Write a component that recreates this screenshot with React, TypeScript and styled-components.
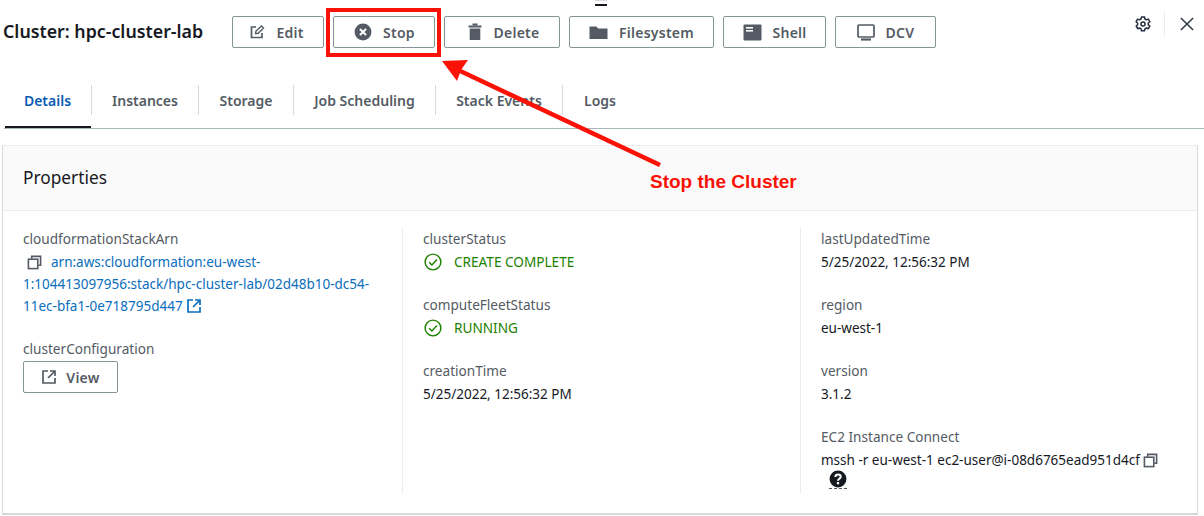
import styled, { createGlobalStyle } from 'styled-components';
import { ReactNode } from 'react';

const GlobalStyle = createGlobalStyle`
  html, body {
    margin: 0;
    padding: 0;
    background: #fff;
    font-family: 'Noto Sans', 'Open Sans', sans-serif;
    color: #16191f;
  }
  * { box-sizing: border-box; }
`;

const Page = styled.div`
  position: relative;
  width: 1204px;
  height: 516px;
  overflow: hidden;
`;

const DragHandle = styled.div`
  position: absolute;
  top: 0;
  left: 595px;
  width: 12px;
  height: 6px;
  border-top: 1px solid #d5dbdb;
  border-bottom: 2px solid #16191f;
`;

const Toolbar = styled.div`
  display: flex;
  align-items: center;
  height: 64px;
  padding-left: 3px;
`;

const Title = styled.h1`
  margin: -2px 28px 0 0;
  width: 201px;
  font-size: 17.8px;
  font-weight: 600;
  white-space: nowrap;
`;

const Actions = styled.div`
  display: flex;
  gap: 9px;
`;

const ActionButton = styled.button<{ $width: number; $nudge?: number }>`
  display: flex;
  align-items: center;
  justify-content: center;
  gap: 11px;
  width: ${({ $width }) => $width}px;
  height: 32px;
  background: #fff;
  border: 1px solid #879596;
  border-radius: 2px;
  font-family: inherit;
  font-size: 14px;
  font-weight: 600;
  letter-spacing: 0.25px;
  color: #545b64;
  padding: 0 ${({ $nudge }) => ($nudge && $nudge < 0 ? -$nudge : 0)}px 0 ${({ $nudge }) => ($nudge && $nudge > 0 ? $nudge : 0)}px;
`;

const ToolIcons = styled.div`
  display: flex;
  align-items: center;
  margin-left: auto;
  margin-top: -16px;
  margin-right: 0;
`;

const IconSlot = styled.div<{ $divider?: boolean }>`
  display: flex;
  align-items: center;
  width: ${({ $divider }) => ($divider ? 40 : 29)}px;
  height: 24px;
  ${({ $divider }) => $divider && 'border-left: 1px solid #eaeded; padding-left: 15px;'}
`;

const Tabs = styled.nav`
  display: flex;
  align-items: flex-start;
  height: 65px;
  margin-left: 4px;
  padding-top: 21px;
  border-bottom: 1px solid #aab7b8;
`;

const Tab = styled.div<{ $active?: boolean; $width: number; $last?: boolean }>`
  position: relative;
  display: flex;
  align-items: center;
  justify-content: center;
  width: ${({ $width }) => $width}px;
  height: 30px;
  font-size: 14px;
  font-weight: 600;
  color: ${({ $active }) => ($active ? '#0a5bb5' : '#545b64')};
  border-right: ${({ $last }) => ($last ? 'none' : '1px solid #d5dbdb')};
  ${({ $active }) =>
    $active &&
    `&::after {
      content: '';
      position: absolute;
      left: 1px;
      right: 0;
      top: 41px;
      height: 2px;
      background: #16191f;
    }`}
`;

const Panel = styled.section`
  margin: 16px 6px 0 2px;
  height: 370px;
  border: 1px solid #d5dbdb;
  border-top-color: #eaeded;
  border-bottom-width: 2px;
`;

const PanelHeader = styled.header`
  display: flex;
  align-items: center;
  height: 65px;
  padding-left: 20px;
  padding-bottom: 2px;
  background: #fafafa;
  border-bottom: 1px solid #eaeded;
  font-size: 17.3px;
  color: #16191f;
`;

const Columns = styled.div`
  display: grid;
  grid-template-columns: 399px 398px 1fr;
  padding-top: 16px;
  height: 283px;
`;

const Column = styled.div<{ $divider?: boolean }>`
  display: flex;
  flex-direction: column;
  gap: 21px;
  padding: 1px 20px 0;
  height: 267px;
  overflow: hidden;
  border-left: ${({ $divider }) => ($divider ? '1px solid #eaeded' : 'none')};
`;

const Field = styled.div`
  display: flex;
  flex-direction: column;
  gap: 2px;
`;

const Label = styled.div`
  font-size: 13.6px;
  line-height: 21px;
  color: #545b64;
`;

const Value = styled.div`
  font-size: 13.5px;
  line-height: 22px;
  color: #16191f;
`;

const ArnValue = styled.div`
  font-size: 13.5px;
  line-height: 22px;
  color: #0a6ebd;
  width: 352px;
`;

const CopyMark = styled.span<{ $left?: number; $right?: number }>`
  color: #545b64;
  margin-left: ${({ $left }) => $left ?? 0}px;
  margin-right: ${({ $right }) => $right ?? 0}px;
`;

const Status = styled.div`
  display: flex;
  align-items: center;
  gap: 12px;
  font-size: 13.6px;
  line-height: 22px;
  color: #1d8102;
  padding-left: 1px;
`;

const ViewButton = styled(ActionButton)`
  gap: 9px;
`;

const InlineSvg = styled.svg`
  display: inline-block;
  vertical-align: -3px;
`;

const HelpRow = styled.div`
  position: relative;
  height: 20px;
  padding-left: 8px;
  margin-top: -3px;
  &::after {
    content: '';
    position: absolute;
    left: 8px;
    top: 18px;
    width: 18px;
    border-top: 1px dashed #545b64;
  }
`;

const Annotation = styled.svg`
  position: absolute;
  inset: 0;
  pointer-events: none;
`;

const Callout = styled.div`
  position: absolute;
  left: 650px;
  top: 171px;
  font-family: 'Liberation Sans', Arial, sans-serif;
  font-size: 19px;
  font-weight: 700;
  color: #fb1207;
  white-space: nowrap;
`;

const Icon = ({ size = 16, children }: { size?: number; children: ReactNode }) => (
  <InlineSvg width={size} height={size} viewBox="0 0 16 16" fill="none" stroke="currentColor" strokeWidth="1.7">
    {children}
  </InlineSvg>
);

const CopyIcon = () => (
  <Icon size={15}>
    <path d="M5 4V1.5h9.5V11H12" />
    <rect x="1.5" y="4.5" width="10" height="10" />
  </Icon>
);

const ExternalIcon = () => (
  <Icon>
    <path d="M7 2H2v12h12V9" />
    <path d="M9 2h5v5M14 2 7 9" />
  </Icon>
);

const CheckIcon = () => (
  <Icon size={18}>
    <circle cx="8" cy="8" r="7" strokeWidth="1.3" />
    <path d="m4.6 8.2 2.4 2.4 4.6-4.8" strokeWidth="1.3" />
  </Icon>
);

const HelpIcon = () => (
  <svg width="18" height="18" viewBox="0 0 16 16">
    <circle cx="8" cy="8" r="7.5" fill="#16191f" />
    <path d="M5.6 6.2C5.7 4.8 6.7 4 8 4s2.4.8 2.4 2c0 1.8-2.4 1.8-2.4 3.6" fill="none" stroke="#fff" strokeWidth="1.8" />
    <rect x="7" y="10.7" width="2" height="2" fill="#fff" />
  </svg>
);

const timeFields = [
  { label: 'lastUpdatedTime', value: '5/25/2022, 12:56:32 PM' },
  { label: 'region', value: 'eu-west-1' },
  { label: 'version', value: '3.1.2' },
];

const tabs = [
  { label: 'Details', width: 88, active: true },
  { label: 'Instances', width: 107 },
  { label: 'Storage', width: 95 },
  { label: 'Job Scheduling', width: 142 },
  { label: 'Stack Events', width: 127 },
  { label: 'Logs', width: 74, last: true },
];

export default function App() {
  return (
    <Page>
      <GlobalStyle />
      <DragHandle />
      <Toolbar>
        <Title>Cluster: hpc-cluster-lab</Title>
        <Actions>
          <ActionButton $width={92} $nudge={-3}>
            <Icon>
              <path d="M7 3H2.5v10.500h10.500V9" />
              <path d="m6.500 9.500.5-2.500 5.500-5 2 2-5.500 5.500z" strokeWidth="1.400" />
            </Icon>
            Edit
          </ActionButton>
          <ActionButton $width={102} $nudge={1}>
            <svg width="18" height="18" viewBox="0 0 16 16">
              <circle cx="8" cy="8" r="7.500" fill="#545b64" />
              <path d="m5.300 5.300 5.400 5.400m0-5.400-5.400 5.400" stroke="#fff" strokeWidth="1.800" />
            </svg>
            Stop
          </ActionButton>
          <ActionButton $width={116} $nudge={2}>
            <svg width="16" height="18" viewBox="0 0 16 18" fill="#545b64">
              <rect x="5.500" y="0.500" width="5" height="2" />
              <rect x="1.500" y="2.500" width="13" height="2" />
              <path d="M2.700 5.500h10.600V17H2.700z" />
            </svg>
            Delete
          </ActionButton>
          <ActionButton $width={145}>
            <svg width="19" height="15" viewBox="0 0 19 15" fill="#545b64">
              <path d="M0.500 1.500h7l1.500 2h9.500V14H0.500z" />
            </svg>
            Filesystem
          </ActionButton>
          <ActionButton $width={103}>
            <svg width="19" height="17" viewBox="0 0 19 17">
              <rect x="0.500" y="0.500" width="18" height="16" rx="1" fill="#545b64" />
              <rect x="3" y="3" width="7" height="1.600" fill="#fff" />
              <rect x="3" y="6" width="7" height="1.600" fill="#fff" />
            </svg>
            Shell
          </ActionButton>
          <ActionButton $width={101}>
            <svg width="18" height="17" viewBox="0 0 18 17" fill="none" stroke="#545b64" strokeWidth="1.700">
              <rect x="1" y="1" width="16" height="12" rx="1" />
              <path d="M4 15.500h10" strokeWidth="2.200" />
            </svg>
            DCV
          </ActionButton>
        </Actions>
        <ToolIcons>
          <IconSlot>
            <svg width="16" height="16" viewBox="0 0 16 16" fill="none" stroke="#232f3e" strokeWidth="1.500">
              <circle cx="8" cy="8" r="2" />
              <path d="M6.500 1h3l.4 2 1.500.8 1.900-.7 1.500 2.600-1.500 1.300v1.800l1.500 1.300-1.500 2.600-1.900-.7-1.500.8-.4 2h-3l-.4-2-1.500-.8-1.900.7-1.500-2.600L2.600 8.800V7L1.100 5.700l1.500-2.600 1.900.7L6 3z" strokeLinejoin="round" />
            </svg>
          </IconSlot>
          <IconSlot $divider>
            <svg width="14" height="14" viewBox="0 0 15 15" stroke="#232f3e" strokeWidth="1.500">
              <path d="m1 1 13 13M14 1 1 14" />
            </svg>
          </IconSlot>
        </ToolIcons>
      </Toolbar>
      <Tabs>
        {tabs.map((tab) => (
          <Tab key={tab.label} $active={tab.active} $width={tab.width} $last={tab.last}>
            {tab.label}
          </Tab>
        ))}
      </Tabs>
      <Panel>
        <PanelHeader>Properties</PanelHeader>
        <Columns>
          <Column>
            <Field>
              <Label>cloudformationStackArn</Label>
              <ArnValue>
                <CopyMark $left={4} $right={9}><CopyIcon /></CopyMark>
                arn:aws:cloudformation:eu-west-1:104413097956:stack/hpc-cluster-lab/02d48b10-dc54-11ec-bfa1-0e718795d447{' '}
                <ExternalIcon />
              </ArnValue>
            </Field>
            <Field>
              <Label>clusterConfiguration</Label>
              <ViewButton $width={95}>
                <Icon>
                  <path d="M7 2H2v12h12V9" />
                  <path d="M9 2h5v5M14 2 7 9" />
                </Icon>
                View
              </ViewButton>
            </Field>
          </Column>
          <Column $divider>
            <Field>
              <Label>clusterStatus</Label>
              <Status>
                <CheckIcon />
                CREATE COMPLETE
              </Status>
            </Field>
            <Field>
              <Label>computeFleetStatus</Label>
              <Status>
                <CheckIcon />
                RUNNING
              </Status>
            </Field>
            <Field>
              <Label>creationTime</Label>
              <Value>5/25/2022, 12:56:32 PM</Value>
            </Field>
          </Column>
          <Column $divider>
            {timeFields.map((field) => (
              <Field key={field.label}>
                <Label>{field.label}</Label>
                <Value>{field.value}</Value>
              </Field>
            ))}
            <Field>
              <Label>EC2 Instance Connect</Label>
              <Value>
                mssh -r eu-west-1 ec2-user@i-08d6765ead951d4cf{' '}
                <CopyMark><CopyIcon /></CopyMark>
              </Value>
              <HelpRow>
                <HelpIcon />
              </HelpRow>
            </Field>
          </Column>
        </Columns>
      </Panel>
      <Annotation width="1204" height="516" viewBox="0 0 1204 516">
        <rect x="328" y="10" width="111" height="45" fill="none" stroke="#fb1207" strokeWidth="4" />
        <path d="M660 165 456 69" stroke="#fb1207" strokeWidth="4.500" fill="none" />
        <path d="M442 61 468 60 461 70 457 81z" fill="#fb1207" />
      </Annotation>
      <Callout>Stop the Cluster</Callout>
    </Page>
  );
}
